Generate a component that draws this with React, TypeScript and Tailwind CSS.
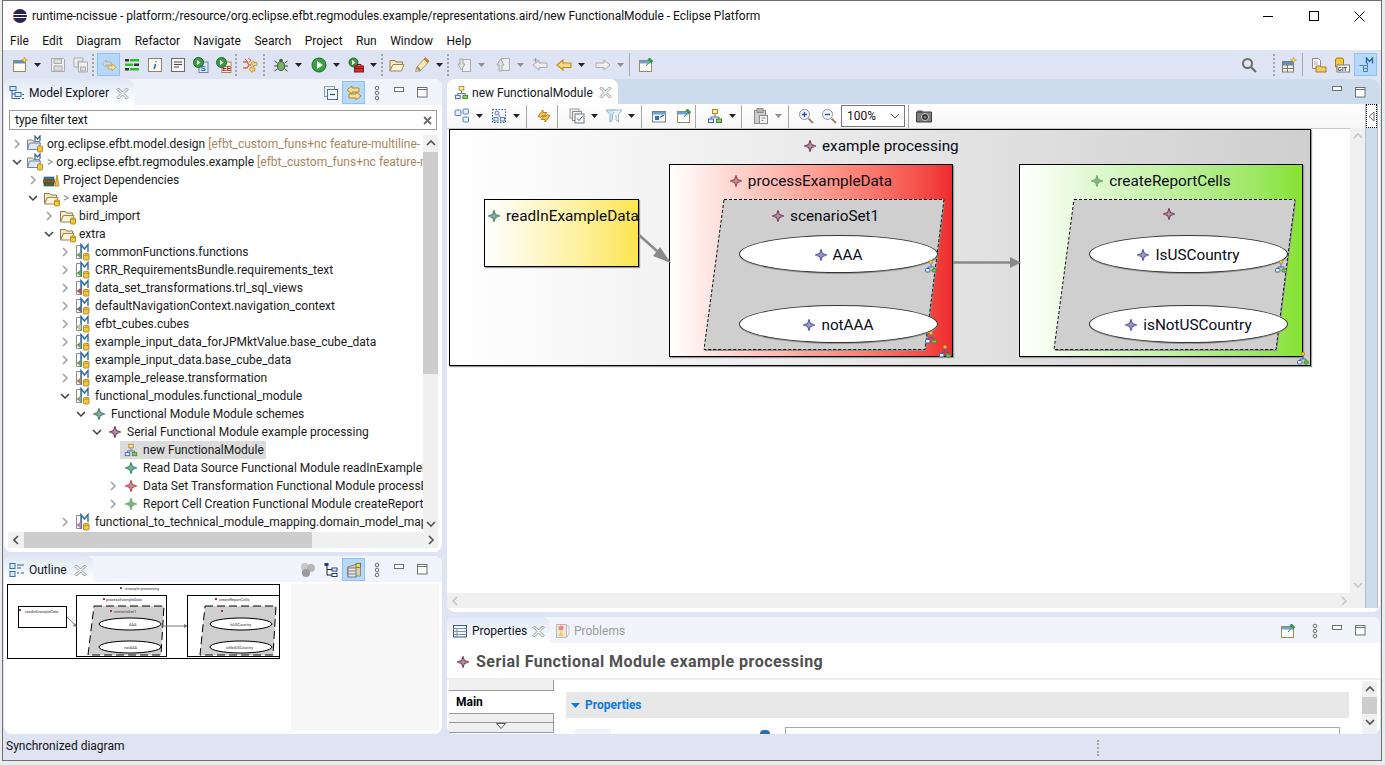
import type { ReactNode } from "react";

// ---- small drawn icons ----

type IconProps = { className?: string };

function Diamond({ color = "#8a3a5e", size = 12 }: { color?: string; size?: number }) {
  return (
    <svg width={size} height={size} viewBox="0 0 12 12" className="shrink-0">
      <path d="M6 .5 7.4 4.6 11.5 6 7.4 7.4 6 11.5 4.6 7.4.5 6 4.6 4.6Z" fill="#a0a0ac" stroke={color} strokeWidth="1.100" />
    </svg>
  );
}

function DiagramGlyph({ size = 16 }: { size?: number }) {
  return (
    <svg width={size} height={size} viewBox="0 0 16 16" className="shrink-0">
      <path d="M8 6v3M4 11V9h8v2" fill="none" stroke="#4a6aa8" />
      <rect x="5.5" y="1.5" width="5" height="4" fill="#fbe9a8" stroke="#b98a1c" />
      <rect x="1.5" y="11" width="5" height="3.5" fill="#e6eefa" stroke="#3b63ad" />
      <rect x="9.5" y="11" width="5" height="3.5" fill="#8ccb5e" stroke="#3f8a2e" />
    </svg>
  );
}

function Cyl() {
  return (
    <>
      <rect x="11" y="10" width="5" height="6" rx="1" fill="#f3c63c" stroke="#a67c10" strokeWidth=".8" />
      <path d="M11.2 11.5h4.6" stroke="#a67c10" strokeWidth=".6" />
    </>
  );
}

function ProjectIcon() {
  return (
    <svg width="18" height="18" viewBox="0 0 18 18" className="shrink-0">
      <path d="M1.5 5h5l1 1.5h6v8h-12Z" fill="#f6e8c4" stroke="#77838f" />
      <path d="M1.5 14.5 3.5 8h11l-1.5 6.5Z" fill="#dbe8f6" stroke="#6a86a8" />
      <path d="M9 6V1l2.4 3L14 1v5" fill="none" stroke="#2f5f98" strokeWidth="1.2" />
      <rect x="11.5" y="11" width="5" height="6" rx="1" fill="#f3c63c" stroke="#a67c10" strokeWidth=".8" />
    </svg>
  );
}

function FolderOpenIcon() {
  return (
    <svg width="17" height="17" viewBox="0 0 17 17" className="shrink-0">
      <path d="M1.5 3.5h5l1.2 1.5h5.8v2.5h-9l-3 6.5Z" fill="#f8e6bd" stroke="#8a7a58" />
      <path d="M1.5 14 4.5 7.5h10.5L12.5 14Z" fill="#fdf3da" stroke="#a08850" />
      <g transform="translate(.5 0)"><Cyl /></g>
    </svg>
  );
}

function LibraryIcon() {
  return (
    <svg width="17" height="17" viewBox="0 0 17 17" className="shrink-0">
      <rect x="1" y="5" width="10" height="3" fill="#3e7f86" stroke="#2b4f56" strokeWidth=".6" />
      <rect x="0.5" y="8" width="11" height="3" fill="#9c5b2e" stroke="#5d3413" strokeWidth=".6" />
      <rect x="1" y="11" width="10" height="3" fill="#3f6d3f" stroke="#2d4a2d" strokeWidth=".6" />
      <path d="M12 14 14 3l2 11Z" fill="#f2c53d" stroke="#9c7d1a" strokeWidth=".7" />
    </svg>
  );
}

function ModelFileIcon({ tint = "#6aa84f" }: { tint?: string }) {
  return (
    <svg width="16" height="18" viewBox="0 0 16 18" className="shrink-0">
      <path d="M1.5 2.500h5v13h-5Z" fill="#fff" stroke="#8a8a8a" />
      <path d="M6 9V1.500L9.500 6 13 1.500V9" fill="none" stroke="#2f6aa8" strokeWidth="1.400" />
      <path d="M6.500 8.500 2 12l4.500 3.500Z" fill={tint} stroke="#555" strokeWidth=".5" />
      <rect x="8.5" y="10.5" width="5.5" height="6.5" rx="1" fill="#f3c63c" stroke="#a67c10" strokeWidth=".8" />
      <path d="M8.800 12.300h5" stroke="#a67c10" strokeWidth=".6" />
    </svg>
  );
}

function Close({ className = "" }: IconProps) {
  return (
    <svg width="13" height="13" viewBox="0 0 13 13" className={`shrink-0 ${className}`}>
      <path d="M2.5 1 6.5 5l4-4 1.500 1.500-4 4 4 4-1.500 1.500-4-4-4 4L1 10.500l4-4-4-4Z" fill="#fff" stroke="#858585" strokeWidth=".9" />
    </svg>
  );
}

function Chevron({ open }: { open?: boolean }) {
  return (
    <svg width="10" height="10" viewBox="0 0 10 10" className="shrink-0">
      {open ? (
        <path d="M1 3 5 7l4-4" fill="none" stroke="#404040" strokeWidth="1.5" />
      ) : (
        <path d="M3 1l4 4-4 4" fill="none" stroke="#a0a0a0" strokeWidth="1.5" />
      )}
    </svg>
  );
}

function Dots() {
  return (
    <svg width="8" height="16" viewBox="0 0 8 16">
      <g fill="none" stroke="#6f6f6f">
        <circle cx="4" cy="3" r="1.800" />
        <circle cx="4" cy="8" r="1.800" />
        <circle cx="4" cy="13" r="1.800" />
      </g>
    </svg>
  );
}

function Minimize() {
  return (
    <svg width="11" height="6" viewBox="0 0 11 6" className="-mt-[6px]">
      <rect x=".5" y=".5" width="9" height="4" fill="#fff" stroke="#6f6f6f" />
    </svg>
  );
}

function Maximize() {
  return (
    <svg width="11" height="11" viewBox="0 0 11 11">
      <rect x=".5" y=".5" width="9.500" height="9.500" fill="#fff" stroke="#6f6f6f" />
      <path d="M.5 2.500h9.500" stroke="#6f6f6f" />
    </svg>
  );
}

function S({ children }: { children: ReactNode }) {
  return (
    <svg width="16" height="16" viewBox="0 0 16 16" className="shrink-0">
      {children}
    </svg>
  );
}

const PlayDot = ({ x = 5.5, y = 5.5, r = 5 }: { x?: number; y?: number; r?: number }) => (
  <>
    <circle cx={x} cy={y} r={r} fill="#3c9a41" stroke="#1e6a2c" />
    <path d={`M${x - 1.5} ${y - 2.5}v5l3.500-2.500Z`} fill="#fff" />
  </>
);

const icons: Record<string, ReactNode> = {
  newWiz: (
    <S>
      <rect x="1.500" y="3.500" width="12" height="11" fill="#fdfaf0" stroke="#9c8a62" />
      <rect x="2" y="4" width="11" height="2.500" fill="#5c8ec8" />
      <path d="M12.500 0l.9 2.100 2.100.9-2.100.9-.9 2.100-.9-2.100-2.100-.9 2.100-.9Z" fill="#f6d55c" stroke="#a88a20" strokeWidth=".5" />
    </S>
  ),
  save: (
    <S>
      <path d="M1.500 1.500h12l1 1v12h-13Z" fill="#f0f0f0" stroke="#aaa" />
      <rect x="4" y="2" width="7.500" height="4.500" fill="#ddd" stroke="#aaa" />
      <rect x="4" y="9" width="8" height="5" fill="#ddd" stroke="#aaa" />
    </S>
  ),
  saveAll: (
    <S>
      <path d="M1 1h9v3h-5v6H1Z" fill="#eee" stroke="#aaa" />
      <path d="M5.500 5h9v10h-9Z" fill="#f0f0f0" stroke="#aaa" />
      <rect x="7.500" y="10" width="5" height="4" fill="#ddd" stroke="#aaa" />
    </S>
  ),
  toggleSync: (
    <S>
      <path d="M1 7 5 3v2h5v3H5v2Z" fill="#d9d9d9" stroke="#aaa" />
      <path d="M15 10l-4 4v-2H7V9h4V7Z" fill="#f5dfa8" stroke="#c4a860" />
    </S>
  ),
  bars: (
    <S>
      <rect x="1" y="2" width="4" height="2.500" fill="#333" />
      <rect x="6" y="2" width="9" height="2.500" fill="#2bc02b" />
      <rect x="1" y="6.500" width="8" height="2.500" fill="#2bc02b" />
      <rect x="10" y="6.500" width="5" height="2.500" fill="#333" />
      <rect x="1" y="11" width="4" height="2.500" fill="#333" />
      <rect x="6" y="11" width="9" height="2.500" fill="#2bc02b" />
    </S>
  ),
  info: (
    <S>
      <rect x="1.500" y="1.500" width="13" height="13" fill="#fdfaf0" stroke="#8a8470" />
      <path d="M9 4.200v1M8.500 7l-1.300 5" stroke="#2f6fc0" strokeWidth="1.700" fill="none" />
    </S>
  ),
  textDoc: (
    <S>
      <rect x="1.500" y="1.500" width="13" height="13" fill="#f4f4f4" stroke="#6a6a6a" />
      <path d="M4 5h8M4 7.500h8M4 10h5" stroke="#444" />
    </S>
  ),
  runS: (
    <S>
      <rect x="6" y="5" width="9" height="10.500" fill="#dce9f6" stroke="#6a86a8" />
      <text x="7.500" y="14" fontSize="8" fontWeight="700" fill="#2e6aa8" fontFamily="Liberation Sans">S</text>
      <PlayDot />
    </S>
  ),
  runEE: (
    <S>
      <rect x="6" y="5" width="9" height="10.500" fill="#fdf3da" stroke="#a08850" />
      <text x="6.500" y="14" fontSize="6.500" fontWeight="700" fill="#b0201a" fontFamily="Liberation Sans">EE</text>
      <PlayDot />
    </S>
  ),
  share: (
    <S>
      <path d="M1 5h4l2 3-2 3H1M7 8h2" stroke="#e8663c" strokeWidth="1.300" fill="none" />
      <path d="M6 1l3 2-2 2.500M3 2l3 3" stroke="#e8663c" strokeWidth="1" fill="none" />
      <path d="M9 6l3-2v1.500h3v3h-3V10Z" fill="#f5d36a" stroke="#b88a1c" strokeWidth=".7" />
      <path d="M7 12l3-2.500V11h3v3h-3v1.500Z" fill="#f5d36a" stroke="#b88a1c" strokeWidth=".7" />
    </S>
  ),
  bug: (
    <S>
      <ellipse cx="8" cy="9" rx="3.500" ry="4.500" fill="#7fb069" stroke="#3b5a35" />
      <circle cx="8" cy="3.500" r="1.800" fill="#43603c" />
      <path d="M4.500 6 1.500 4M4 9H1M4.500 12l-3 2M11.500 6l3-2M12 9h3M11.500 12l3 2" stroke="#3a4a48" />
    </S>
  ),
  run: (
    <S>
      <circle cx="8" cy="8" r="7" fill="#39a13e" stroke="#1f6b2c" />
      <path d="M6 4v8l6-4Z" fill="#fff" />
    </S>
  ),
  ext: (
    <S>
      <PlayDot r={4.500} />
      <rect x="6.500" y="9" width="9" height="6" fill="#d62d2d" stroke="#8c1515" />
      <path d="M9 9V7.500h4V9M6.500 11.500h9" stroke="#7b1010" fill="none" />
    </S>
  ),
  open: (
    <S>
      <path d="M1 3.500h5l1 1.500h6.500v3H4l-3 6Z" fill="#f8e6bd" stroke="#8a7a58" />
      <path d="M1 14 4 7.500h11L12.500 14Z" fill="#fdf3da" stroke="#a08850" />
    </S>
  ),
  pen: (
    <S>
      <path d="M1.500 14.500 3 10l7-8 4 3.500-7.500 8Z" fill="#f9e7b8" stroke="#b79a5c" />
      <path d="M10 2l4 3.500 1-1.500-3.500-3.500Z" fill="#d88a2c" stroke="#a5620e" strokeWidth=".6" />
      <path d="M3 10l3.500 4" stroke="#8d8d8d" strokeWidth="2" />
    </S>
  ),
  navDown: (
    <S>
      <rect x="6.500" y="2.500" width="8" height="12" fill="#eee" stroke="#aaa" />
      <path d="M2 7h2V2h3v5h2l-3.500 6Z" fill="#e2e2e2" stroke="#a8a8a8" />
    </S>
  ),
  navUp: (
    <S>
      <rect x="6.500" y="1.500" width="8" height="12" fill="#eee" stroke="#aaa" />
      <path d="M2 8h2v6h3V8h2L5.500 2Z" fill="#e2e2e2" stroke="#a8a8a8" />
    </S>
  ),
  lastEdit: (
    <S>
      <path d="M1 8l6-4.500V6h8v4.500H7V13Z" fill="#ececec" stroke="#aaa" />
      <path d="M3.500 1v4M1.500 3h4" stroke="#999" />
    </S>
  ),
  back: (
    <S>
      <path d="M1 8l6-5v3h8v4.500H7V13Z" fill="#f8d88a" stroke="#c08a1e" strokeWidth="1.100" />
    </S>
  ),
  fwd: (
    <S>
      <path d="M15 8 9 3v3H1v4.500h8V13Z" fill="#eeeeee" stroke="#ababab" />
    </S>
  ),
  pin: (
    <S>
      <rect x="1.500" y="3.500" width="12" height="11" fill="#fff" stroke="#9c8a62" />
      <rect x="2" y="4" width="11" height="2.500" fill="#6ba3da" />
      <path d="M8 9l3-3.500M10 2.500l3.500 3 1-1.500L11.500 1Z" stroke="#2c8a3c" fill="#3da44a" strokeWidth="1" />
    </S>
  ),
  search: (
    <S>
      <circle cx="6.500" cy="6.500" r="4.500" fill="none" stroke="#6b6b6b" strokeWidth="2" />
      <path d="M10 10l5 5" stroke="#6b6b6b" strokeWidth="2.200" />
    </S>
  ),
  persp: (
    <S>
      <rect x="1.500" y="4.500" width="11" height="10.500" fill="#f9f4e4" stroke="#7a7a72" />
      <path d="M1.500 8h11M1.500 11.500h11M6.500 4.500V15" stroke="#7a7a72" />
      <rect x="2" y="5" width="10" height="3" fill="#5f8fc0" />
      <path d="M12.500 0l.9 2.100 2.100.9-2.100.9-.9 2.100-.9-2.100-2.100-.9 2.100-.9Z" fill="#f6d55c" stroke="#a88a20" strokeWidth=".5" />
    </S>
  ),
  resPersp: (
    <S>
      <path d="M1.500 1.500h6l2 2v8h-8Z" fill="#fff" stroke="#8a8a8a" />
      <path d="M3 5h4M3 7h4" stroke="#aaa" />
      <path d="M5 9h4l1 1h5v5H5Z" fill="#f4c869" stroke="#a67c10" />
    </S>
  ),
  git: (
    <S>
      <rect x="1.500" y="1" width="8" height="10" rx="2" fill="#f3c63c" stroke="#a67c10" />
      <rect x="3" y="8" width="12.500" height="7" fill="#fff" stroke="#777" />
      <text x="3.800" y="14" fontSize="5.500" fontWeight="700" fill="#333" fontFamily="Liberation Sans">GIT</text>
    </S>
  ),
  modeling: (
    <S>
      <path d="M1.500 8.500h4v3h4v-3h-3.500M5.500 11.500v3h4v-3M9.500 8.500V6" fill="none" stroke="#4f81b0" />
      <path d="M8.500 6.500V1l3 3.500 3-3.500v5.500" fill="none" stroke="#2f6aa0" strokeWidth="1.400" />
    </S>
  ),
  selectAll: (
    <S>
      <rect x="1" y="2" width="6" height="5.500" rx="1" fill="#e4effa" stroke="#5c82b4" />
      <rect x="9" y="1" width="5.500" height="5" rx="1" fill="#e4effa" stroke="#5c82b4" />
      <rect x="9" y="9" width="5.500" height="5" rx="1" fill="#e4effa" stroke="#5c82b4" />
    </S>
  ),
  arrange: (
    <S>
      <rect x="1.500" y="1.500" width="13" height="13" fill="none" stroke="#2b4f96" strokeDasharray="1.500 1.500" />
      <circle cx="6" cy="5" r="2" fill="#e4effa" stroke="#5c82b4" />
      <rect x="3" y="9.500" width="4" height="3.500" fill="#e4effa" stroke="#5c82b4" />
      <rect x="9.500" y="9.500" width="4" height="3.500" fill="#e4effa" stroke="#5c82b4" />
      <path d="M7 6l3 4" stroke="#5c82b4" />
    </S>
  ),
  refresh: (
    <S>
      <path d="M2 8.500 7 2v2.500h4L7 9V7L4.500 9.500Z" fill="#f5c84f" stroke="#b4801a" />
      <path d="M14 7.500 9 14v-2.500H5L9 7v2l2.500-2.500Z" fill="#f5c84f" stroke="#b4801a" />
    </S>
  ),
  layers: (
    <S>
      <rect x="1" y="1" width="9" height="9" fill="#f0f0f0" stroke="#9a9a9a" />
      <rect x="3.500" y="3.500" width="9" height="9" fill="#f4f4f4" stroke="#8a8a8a" />
      <rect x="6" y="6" width="9" height="9" fill="#fafafa" stroke="#6a7a88" />
      <path d="M8 10.500l2 2 3.500-4" fill="none" stroke="#4a5a68" />
    </S>
  ),
  filter: (
    <S>
      <path d="M0 2h10L6.500 6.500V12L4 14V6.500Z" fill="#d2e6f4" stroke="#8db0c4" />
      <path d="M7 2h9l-3.500 4.500V14L10 12V7" fill="#e8f2f8" stroke="#9abccc" />
    </S>
  ),
  showLink: (
    <S>
      <rect x="1.500" y="3.500" width="13" height="10.500" fill="#f5f9fc" stroke="#72808c" />
      <rect x="2" y="4" width="12" height="2.500" fill="#6ba3da" />
      <rect x="4" y="8" width="4" height="4" fill="#3a70b0" />
      <path d="M9 9.500l2-2h2" stroke="#2c8a3c" />
    </S>
  ),
  paste: (
    <S>
      <rect x="1.500" y="2.500" width="11" height="13" fill="#cfcfcf" stroke="#8a8a8a" />
      <rect x="4" y=".5" width="6" height="4" fill="#b5b5b5" stroke="#8a8a8a" />
      <rect x="6.500" y="7.500" width="8" height="8" fill="#f6f6f6" stroke="#8a8a8a" />
      <path d="M8.500 10h4M8.500 12.500h2" stroke="#888" />
    </S>
  ),
  zoomIn: (
    <S>
      <circle cx="6.500" cy="6.500" r="5" fill="#f1f5fb" stroke="#8a94a8" />
      <path d="M4 6.500h5M6.500 4v5" stroke="#2a52b0" strokeWidth="1.400" />
      <path d="M10.500 10.500l4.500 4.500" stroke="#a08a60" strokeWidth="2" />
    </S>
  ),
  zoomOut: (
    <S>
      <circle cx="6.500" cy="6.500" r="5" fill="#f1f5fb" stroke="#8a94a8" />
      <path d="M4 6.500h5" stroke="#2a52b0" strokeWidth="1.400" />
      <path d="M10.500 10.500l4.500 4.500" stroke="#a08a60" strokeWidth="2" />
    </S>
  ),
  camera: (
    <S>
      <path d="M.5 4h15v10H.5Z" fill="#7e7e7e" stroke="#3e3e3e" />
      <rect x="1.500" y="2.500" width="5" height="2" fill="#555" />
      <circle cx="9" cy="9" r="3.500" fill="#2b2b2b" stroke="#d0d0d0" />
      <circle cx="9" cy="9" r="1.500" fill="#6f8f7a" />
    </S>
  ),
  collapse: (
    <S>
      <rect x="1.500" y="1.500" width="10" height="10" fill="#e8f0f8" stroke="#8a9bae" />
      <rect x="4.500" y="4.500" width="10" height="10" fill="#f4f8fc" stroke="#54708e" />
      <path d="M7 9.500h5" stroke="#1c4a86" strokeWidth="1.200" />
    </S>
  ),
  linkEditor: (
    <S>
      <path d="M1 5l5-4v2h7v4H6v2Z" fill="#f7dc93" stroke="#b08a24" />
      <path d="M15 11l-5-4v2H3v4h7v2Z" fill="#f7dc93" stroke="#b08a24" />
    </S>
  ),
  balls: (
    <S>
      <circle cx="5" cy="5" r="4" fill="#c7c7c7" />
      <circle cx="11" cy="6" r="4" fill="#b5b5b5" />
      <circle cx="6" cy="11" r="4" fill="#9a9a9a" />
    </S>
  ),
  treeAlt: (
    <S>
      <path d="M4 3v10h5M4 7.500h5" stroke="#222" fill="none" />
      <rect x="1.500" y="1" width="4" height="3" fill="#1b3d8f" />
      <rect x="9" y="6" width="5" height="3" fill="#fff" stroke="#1b3d8f" />
      <rect x="9" y="11.500" width="5" height="3" fill="#fff" stroke="#1b3d8f" />
    </S>
  ),
  table: (
    <S>
      <path d="M1.500 5 14.500 1v13H1.500Z" fill="#d6cfa5" stroke="#8e8a70" />
      <rect x="2" y="6" width="8" height="9" fill="#e8e8e8" stroke="#7a7a7a" />
      <path d="M2 9h8M2 12h8" stroke="#7a7a7a" />
      <rect x="10" y="1.500" width="4.500" height="4" fill="#f5d84a" stroke="#555" strokeWidth=".7" />
    </S>
  ),
  outline: (
    <S>
      <rect x="1" y="1.500" width="5" height="5" fill="#dceaf8" stroke="#2f70b5" />
      <rect x="1" y="9.500" width="5" height="5" fill="#dceaf8" stroke="#2f70b5" />
      <path d="M8 3h7M8 6h4M8 11h2M12 11h3" stroke="#2f5f98" />
    </S>
  ),
  explorer: (
    <S>
      <rect x="1" y="1.500" width="6" height="4" fill="#dceaf8" stroke="#2f70b5" />
      <rect x="6" y="7.500" width="6" height="4" fill="#dceaf8" stroke="#2f70b5" />
      <path d="M3 5.500v8h8M3 9h3M13 9.500h2M13 13.500h2" stroke="#47617e" fill="none" />
    </S>
  ),
  propsTab: (
    <S>
      <rect x="1.500" y="2.500" width="13" height="11.500" fill="#f4f7fb" stroke="#3f5a86" />
      <path d="M1.500 5.500h13M1.500 8.500h13M1.500 11.500h13M5 5.500V14" stroke="#7c8fae" />
    </S>
  ),
  problems: (
    <S>
      <rect x="1.500" y="1.500" width="10" height="13" fill="#f1e6d6" stroke="#bbb" />
      <circle cx="6" cy="5" r="2.500" fill="#e88a8a" />
      <path d="M3 13l3-5 3 5Z" fill="#f0cc70" />
      <path d="M11.500 3h2.500v7l-2 4" fill="none" stroke="#c6c6c6" />
    </S>
  ),
};

// ---- toolbar bits ----

function Btn({ name, on, className = "" }: { name: string; on?: boolean; className?: string }) {
  return (
    <div
      className={`flex h-[23px] w-[23px] shrink-0 items-center justify-center ${
        on ? "bg-[#b6d9fb] outline outline-[#8ec2f4] -outline-offset-1" : ""
      } ${className}`}
    >
      {icons[name]}
    </div>
  );
}

function Dd({ dim, className = "" }: { dim?: boolean; className?: string }) {
  return (
    <div className={`flex w-[12px] shrink-0 justify-center ${className}`}>
      <svg width="7" height="4" viewBox="0 0 7 4">
        <path d="M0 0h7L3.500 4Z" fill={dim ? "#8f8f8f" : "#222"} />
      </svg>
    </div>
  );
}

function Grip({ className = "" }: { className?: string }) {
  return <div className={`h-[22px] w-[2px] shrink-0 border-l-2 border-dotted border-[#a8a49a] ${className}`} />;
}

function VLine({ className = "" }: { className?: string }) {
  return <div className={`h-[23px] w-px shrink-0 bg-[#a8a8a8] ${className}`} />;
}

function MainToolbar() {
  return (
    <div className="flex h-[29px] items-center bg-[#dfe4f4] pl-[5px] pr-[4px]">
      <Btn name="newWiz" />
      <Dd />
      <Btn name="save" className="ml-[3px]" />
      <Btn name="saveAll" />
      <Grip />
      <Btn name="toggleSync" on className="ml-[3px]" />
      <Btn name="bars" />
      <Btn name="info" />
      <Btn name="textDoc" />
      <Btn name="runS" />
      <Btn name="runEE" />
      <Grip />
      <Btn name="share" className="ml-[1px]" />
      <Grip className="ml-[2px]" />
      <Btn name="bug" className="ml-[4px]" />
      <Dd />
      <Btn name="run" className="ml-[3px]" />
      <Dd />
      <Btn name="ext" className="ml-[2px]" />
      <Dd />
      <Grip className="ml-[2px]" />
      <Btn name="open" className="ml-[2px]" />
      <Btn name="pen" className="ml-[2px]" />
      <Dd />
      <Grip className="ml-[2px]" />
      <Btn name="navDown" className="ml-[3px]" />
      <Dd dim />
      <Btn name="navUp" className="ml-[4px]" />
      <Dd dim />
      <Btn name="lastEdit" className="ml-[2px]" />
      <Btn name="back" className="ml-[1px]" />
      <Dd />
      <Btn name="fwd" className="ml-[4px]" />
      <Dd dim />
      <VLine className="ml-[3px]" />
      <Btn name="pin" className="ml-[4px]" />
      <div className="flex-1" />
      <Btn name="search" />
      <Grip className="ml-[13px]" />
      <Btn name="persp" className="ml-[2px]" />
      <VLine className="ml-[2px]" />
      <Btn name="resPersp" className="ml-[4px]" />
      <Btn name="git" />
      <Btn name="modeling" on className="ml-[1px]" />
    </div>
  );
}

function EditorToolbar() {
  return (
    <div className="flex h-[24px] items-center bg-linear-to-b from-white to-[#f6f6f6] pl-[3px]">
      <Btn name="selectAll" />
      <Dd />
      <Btn name="arrange" className="ml-[2px]" />
      <Dd />
      <VLine className="ml-[4px] h-[20px]" />
      <Btn name="refresh" className="ml-[5px]" />
      <VLine className="ml-[2px] h-[20px]" />
      <Btn name="layers" className="ml-[7px]" />
      <Dd />
      <Btn name="filter" className="ml-[2px]" />
      <Dd />
      <VLine className="ml-[4px] h-[20px]" />
      <Btn name="showLink" className="ml-[5px]" />
      <Btn name="pin" className="ml-[2px]" />
      <VLine className="h-[20px]" />
      <div className="ml-[7px] flex h-[23px] w-[23px] shrink-0 items-center justify-center">
        <DiagramGlyph />
      </div>
      <Dd />
      <VLine className="ml-[3px] h-[20px]" />
      <Btn name="paste" className="ml-[7px]" />
      <Dd dim />
      <VLine className="ml-[4px] h-[20px]" />
      <Btn name="zoomIn" className="ml-[5px]" />
      <Btn name="zoomOut" />
      <div className="ml-[1px] flex h-[22px] w-[64px] shrink-0 items-center justify-between border border-[#7a7a7a] bg-white pl-[5px] pr-[4px] text-[#111]">
        100%
        <svg width="10" height="6" viewBox="0 0 10 6">
          <path d="M1 1l4 4 4-4" fill="none" stroke="#555" />
        </svg>
      </div>
      <VLine className="ml-[3px] h-[20px]" />
      <Btn name="camera" className="ml-[3px]" />
    </div>
  );
}

// ---- tree ----

type Row = { depth: number; open?: boolean; leaf?: boolean; icon: ReactNode; text: string; deco?: string; prefix?: boolean; sel?: boolean };

const rows: Row[] = [
  { depth: 0, icon: <ProjectIcon />, text: "org.eclipse.efbt.model.design", deco: " [efbt_custom_funs+nc feature-multiline-" },
  { depth: 0, open: true, icon: <ProjectIcon />, text: "org.eclipse.efbt.regmodules.example", deco: " [efbt_custom_funs+nc feature-multiline", prefix: true },
  { depth: 1, icon: <LibraryIcon />, text: "Project Dependencies" },
  { depth: 1, open: true, icon: <FolderOpenIcon />, text: "example", prefix: true },
  { depth: 2, icon: <FolderOpenIcon />, text: "bird_import" },
  { depth: 2, open: true, icon: <FolderOpenIcon />, text: "extra" },
  { depth: 3, icon: <ModelFileIcon tint="#7f9a7f" />, text: "commonFunctions.functions" },
  { depth: 3, icon: <ModelFileIcon tint="#4caf50" />, text: "CRR_RequirementsBundle.requirements_text" },
  { depth: 3, icon: <ModelFileIcon tint="#c0504d" />, text: "data_set_transformations.trl_sql_views" },
  { depth: 3, icon: <ModelFileIcon tint="#707070" />, text: "defaultNavigationContext.navigation_context" },
  { depth: 3, icon: <ModelFileIcon tint="#c6d39a" />, text: "efbt_cubes.cubes" },
  { depth: 3, icon: <ModelFileIcon tint="#6aa84f" />, text: "example_input_data_forJPMktValue.base_cube_data" },
  { depth: 3, icon: <ModelFileIcon tint="#6aa84f" />, text: "example_input_data.base_cube_data" },
  { depth: 3, icon: <ModelFileIcon tint="#c48a3c" />, text: "example_release.transformation" },
  { depth: 3, open: true, icon: <ModelFileIcon tint="#8ab06a" />, text: "functional_modules.functional_module" },
  { depth: 4, open: true, icon: <Diamond color="#3f8a6a" />, text: "Functional Module Module schemes" },
  { depth: 5, open: true, icon: <Diamond color="#8a3a5e" />, text: "Serial Functional Module example processing" },
  { depth: 6, leaf: true, sel: true, icon: <DiagramGlyph size={14} />, text: "new FunctionalModule" },
  { depth: 6, leaf: true, icon: <Diamond color="#21996b" />, text: "Read Data Source Functional Module readInExampleData" },
  { depth: 6, icon: <Diamond color="#d0474f" />, text: "Data Set Transformation Functional Module processExampleData" },
  { depth: 6, icon: <Diamond color="#68b768" />, text: "Report Cell Creation Functional Module createReportCells" },
  { depth: 3, icon: <ModelFileIcon tint="#c77fc7" />, text: "functional_to_technical_module_mapping.domain_model_mapping" },
];

function TreeRow({ row }: { row: Row }) {
  return (
    <div className="flex h-[18px] items-center whitespace-nowrap" style={{ paddingLeft: row.depth * 16 + 4 }}>
      <div className="flex w-[10px] shrink-0 justify-center">{!row.leaf && <Chevron open={row.open} />}</div>
      <div className={`ml-[2px] flex h-[18px] items-center pl-[2px] pr-[2px] ${row.sel ? "bg-[#dcdcdc]" : ""}`}>
        <div className="flex w-[18px] shrink-0 justify-center">{row.icon}</div>
        <div className="ml-[3px] flex items-center">
          {row.prefix && <span className="mr-[3px] text-[#8a8a8a]">&gt;</span>}
          <span className="text-[#1a1a1a]">{row.text}</span>
          {row.deco && <span className="whitespace-pre text-[#a4885e]">{row.deco}</span>}
        </div>
      </div>
    </div>
  );
}

function ScrollV({ up, down, dim, thumb }: { up?: boolean; down?: boolean; dim?: boolean; thumb: ReactNode }) {
  return (
    <div className="flex w-[15px] shrink-0 flex-col bg-[#f0f0f0]">
      {up && <Arrow d="M2 7l4-4 4 4" dim={dim} />}
      {thumb}
      {down && <Arrow d="M2 3l4 4 4-4" dim={dim} />}
    </div>
  );
}

function Arrow({ d, dim }: { d: string; dim?: boolean }) {
  return (
    <div className="flex h-[16px] w-[15px] shrink-0 items-center justify-center">
      <svg width="12" height="10" viewBox="0 0 12 10">
        <path d={d} fill="none" stroke={dim ? "#c8c8c8" : "#555"} strokeWidth="1.700" />
      </svg>
    </div>
  );
}

function PanelHeader({ children, actions }: { children: ReactNode; actions: ReactNode }) {
  return (
    <div className="flex h-[26px] shrink-0 items-center justify-between rounded-t-lg bg-[#f2f4fb]">
      <div className="flex h-full items-stretch">{children}</div>
      <div className="flex items-center pr-[8px] pt-[1px]">{actions}</div>
    </div>
  );
}

function Tab({ icon, label, className = "", closeClass = "ml-[7px]" }: { icon: ReactNode; label: string; className?: string; closeClass?: string }) {
  return (
    <div className={`flex items-center rounded-t-lg bg-linear-to-b from-[#dfe8f5] to-white pl-[5px] pt-[2px] ${className}`}>
      {icon}
      <span className="ml-[4px] text-[#10141c]">{label}</span>
      <Close className={closeClass} />
    </div>
  );
}

function Act({ children, on }: { children: ReactNode; on?: boolean }) {
  return (
    <div className={`flex h-[23px] w-[23px] items-center justify-center ${on ? "bg-[#b6d9fb] outline outline-[#8ec2f4] -outline-offset-1" : ""}`}>
      {children}
    </div>
  );
}

function ModelExplorer() {
  return (
    <div className="flex h-[473px] flex-col rounded-lg bg-white">
      <PanelHeader
        actions={
          <>
            <Act>{icons.collapse}</Act>
            <Act on>{icons.linkEditor}</Act>
            <Act><Dots /></Act>
            <Act><Minimize /></Act>
            <Act><Maximize /></Act>
          </>
        }
      >
        <Tab icon={icons.explorer} label="Model Explorer" className="w-[130px]" />
      </PanelHeader>
      <div className="mx-[5px] mt-[5px] flex h-[20px] shrink-0 items-center justify-between border border-[#9a9a9a] bg-white pl-[5px] pr-[4px] text-[#111]">
        type filter text
        <svg width="9" height="9" viewBox="0 0 9 9">
          <path d="M1 1l7 7M8 1 1 8" stroke="#6a6a6a" strokeWidth="1.800" />
        </svg>
      </div>
      <div className="mt-[5px] flex min-h-0 flex-1 pl-[4px] pr-[3px]">
        <div className="w-[415px] overflow-hidden">
          {rows.map((r) => (
            <TreeRow key={r.text} row={r} />
          ))}
        </div>
        <ScrollV
          up
          down
          thumb={
            <div className="flex flex-1 flex-col">
              <div className="h-[1px]" />
              <div className="h-[222px] bg-[#cdcdcd]" />
            </div>
          }
        />
      </div>
      <div className="mx-[4px] mb-[4px] flex h-[16px] shrink-0 items-center bg-[#f0f0f0]">
        <Arrow d="M8 1 4 5l4 4" />
        <div className="ml-[1px] h-full w-[288px] bg-[#cdcdcd]" />
        <div className="flex-1" />
        <Arrow d="M4 1l4 4-4 4" />
      </div>
    </div>
  );
}

function Thumb() {
  const t = "#6a5a6a";
  return (
    <svg width="274" height="76" viewBox="0 0 274 76" className="block shrink-0">
      <rect x=".5" y=".5" width="272" height="74" fill="#fff" stroke="#000" />
      <rect x="11.500" y="22.500" width="48" height="21" fill="#fff" stroke="#000" />
      <rect x="69.500" y="11.500" width="90" height="61" fill="#fff" stroke="#000" />
      <rect x="180.500" y="11.500" width="92" height="61" fill="#fff" stroke="#000" />
      <path d="M87 22h70l-3 49H81Z" fill="#cfcfcf" stroke="#000" strokeDasharray="8 4" />
      <path d="M198 22h71l-3 49h-73Z" fill="#cfcfcf" stroke="#000" strokeDasharray="8 4" />
      <ellipse cx="123" cy="40" rx="31" ry="6" fill="#fff" stroke="#000" />
      <ellipse cx="123" cy="63" rx="31" ry="6" fill="#fff" stroke="#000" />
      <ellipse cx="234" cy="40" rx="31" ry="6" fill="#fff" stroke="#000" />
      <ellipse cx="234" cy="63" rx="31" ry="6" fill="#fff" stroke="#000" />
      <path d="M60 33l8 8M154 42h24" stroke="#777" />
      <path d="M70 43l-4-1 2-3ZM181 42l-4-2v4Z" fill="#777" />
      <g fill="#8a3a5e">
        <rect x="113" y="3" width="2" height="2" />
        <rect x="96" y="14" width="2" height="2" />
        <rect x="208" y="14" width="2" height="2" />
        <rect x="12" y="25" width="2" height="2" />
        <rect x="103" y="26" width="2" height="2" />
        <rect x="214" y="26" width="2" height="2" />
      </g>
      <g fontSize="3.800" fill={t} fontFamily="Roboto, sans-serif" fontWeight="500">
        <text x="118" y="6">example processing</text>
        <text x="18" y="29">readInExampleData</text>
        <text x="99" y="17">processExampleData</text>
        <text x="212" y="17">createReportCells</text>
        <text x="107" y="29">scenarioSet1</text>
        <text x="122" y="42">AAA</text>
        <text x="117" y="65">notAAA</text>
        <text x="223" y="42">IsUSCountry</text>
        <text x="219" y="65">isNotUSCountry</text>
      </g>
    </svg>
  );
}

function OutlinePanel() {
  return (
    <div className="mt-[4px] flex h-[178px] flex-col rounded-lg bg-white">
      <PanelHeader
        actions={
          <>
            <Act>{icons.balls}</Act>
            <Act>{icons.treeAlt}</Act>
            <Act on>{icons.table}</Act>
            <Act><Dots /></Act>
            <Act><Minimize /></Act>
            <Act><Maximize /></Act>
          </>
        }
      >
        <Tab icon={icons.outline} label="Outline" className="w-[90px]" />
      </PanelHeader>
      <div className="flex min-h-0 flex-1 pt-[2px] pl-[3px] pr-[3px] pb-[3px]">
        <Thumb />
        <div className="ml-[10px] flex-1 bg-[#f7f7f7]" />
      </div>
    </div>
  );
}

// ---- diagram canvas ----

function Tiny({ className }: { className: string }) {
  return (
    <div className={`absolute ${className}`}>
      <svg width="12" height="13" viewBox="0 0 12 13">
        <circle cx="6" cy="2" r="1.800" fill="#f5c84f" stroke="#a67c10" strokeWidth=".7" />
        <path d="M6 4v3M3 9V7h6v2" fill="none" stroke="#3b63ad" strokeWidth=".9" />
        <rect x=".5" y="8.500" width="4.500" height="3.500" rx="1" fill="#e4effa" stroke="#3b63ad" />
        <rect x="7" y="9" width="4.500" height="3" rx="1" fill="#7dc24b" stroke="#3f8a2e" />
      </svg>
    </div>
  );
}

function Label({ color, children, className = "" }: { color: string; children?: ReactNode; className?: string }) {
  return (
    <div className={`flex items-center gap-[6px] whitespace-nowrap text-[15.300px] leading-[20px] text-[#0a0a14] ${className}`}>
      <Diamond color={color} size={12} />
      {children && <span>{children}</span>}
    </div>
  );
}

function Ellipse({ color, children, className }: { color: string; children: ReactNode; className: string }) {
  return (
    <div className={`absolute flex h-[38px] w-[199px] items-center justify-center rounded-[50%] border border-[#333] bg-white pt-[2px] shadow-[0_1px_0_#9a9a9a] ${className}`}>
      <Label color={color}>{children}</Label>
    </div>
  );
}

function Diagram() {
  return (
    <div className="absolute left-[2px] top-0 h-[237px] w-[862px] border border-black bg-linear-to-r from-white to-[#cfcfcf] shadow-[1px_1px_1px_#9a9a9a]">
      <Label color="#8a3a5e" className="absolute left-[354px] top-[6px]">example processing</Label>

      <div className="absolute left-[34px] top-[69px] h-[68px] w-[155px] border border-black bg-linear-to-r from-white to-[#fde54a] shadow-[1px_1px_1px_#9a9a9a]">
        <Label color="#3f8a6a" className="pl-[3px] pt-[6px]">readInExampleData</Label>
      </div>

      <div className="absolute left-[219px] top-[34px] flex h-[193px] w-[284px] justify-center border border-black bg-linear-to-r from-white to-[#ee2a2e] pt-[6px] shadow-[1px_1px_1px_#9a9a9a]">
        <Label color="#b04050" className="h-[20px]">processExampleData</Label>
      </div>

      <div className="absolute left-[569px] top-[34px] flex h-[193px] w-[284px] justify-center border border-black bg-linear-to-r from-white to-[#87e22f] pt-[6px] shadow-[1px_1px_1px_#9a9a9a]">
        <Label color="#68b768" className="h-[20px]">createReportCells</Label>
      </div>

      <svg className="absolute left-0 top-0" width="860" height="235" viewBox="0 0 860 235">
        <path d="M275 71h220l-19 150H255Z" fill="#8f8f8f" />
        <path d="M625 71h221l-19 150H605Z" fill="#8f8f8f" />
        <path d="M274 69.500h220l-19 150H254Z" fill="#cfcfcf" stroke="#111" strokeDasharray="3 2" />
        <path d="M624 69.500h221l-19 150H604Z" fill="#cfcfcf" stroke="#111" strokeDasharray="3 2" />
        <path d="M189 105l18 16" stroke="#8a8a8a" strokeWidth="2.500" />
        <path d="M221 133l-18-7 7-9Z" fill="#8a8a8a" />
        <path d="M503 132.500h57" stroke="#8a8a8a" strokeWidth="2.500" />
        <path d="M571 132.500 560 127v11Z" fill="#8a8a8a" />
      </svg>

      <Label color="#8a3a5e" className="absolute left-[322px] top-[76px]">scenarioSet1</Label>
      <Label color="#8a3a5e" className="absolute left-[713px] top-[78px]" />

      <Ellipse color="#5a5ab8" className="left-[289px] top-[105px]">AAA</Ellipse>
      <Ellipse color="#5a5ab8" className="left-[289px] top-[175px]">notAAA</Ellipse>
      <Ellipse color="#5a5ab8" className="left-[639px] top-[105px]">IsUSCountry</Ellipse>
      <Ellipse color="#5a5ab8" className="left-[639px] top-[175px]">isNotUSCountry</Ellipse>

      <Tiny className="left-[475px] top-[130px]" />
      <Tiny className="left-[475px] top-[201px]" />
      <Tiny className="left-[489px] top-[215px]" />
      <Tiny className="left-[825px] top-[130px]" />
      <Tiny className="left-[847px] top-[222px]" />
    </div>
  );
}

function Editor() {
  return (
    <div className="flex h-[533px] flex-col rounded-lg bg-white">
      <div className="flex h-[25px] shrink-0 items-stretch justify-between rounded-t-lg bg-[#cddced]">
        <div className="flex w-[171px] items-center rounded-t-lg bg-white pl-[7px] pt-[2px]">
          <DiagramGlyph size={15} />
          <span className="ml-[3px] text-[#10141c]">new FunctionalModule</span>
          <Close className="ml-[6px]" />
        </div>
        <div className="flex items-center pr-[8px] pt-[1px]">
          <Act><Minimize /></Act>
          <Act><Maximize /></Act>
        </div>
      </div>
      <div className="flex min-h-0 flex-1">
        <div className="flex w-[918px] flex-col">
          <EditorToolbar />
          <div className="flex min-h-0 flex-1">
            <div className="relative flex-1 overflow-hidden border-t border-[#c8c8c8]">
              <Diagram />
            </div>
            <ScrollV up down dim thumb={<div className="flex-1" />} />
          </div>
          <div className="flex h-[15px] shrink-0 items-center justify-between bg-[#f0f0f0] pr-[14px]">
            <Arrow d="M8 1 4 5l4 4" dim />
            <Arrow d="M4 1l4 4-4 4" dim />
          </div>
          <div className="h-[4px] shrink-0" />
        </div>
        <div className="mb-[4px] flex w-[13px] shrink-0 flex-col border-x border-[#b4bcc8] bg-[#cddced]">
          <div className="mx-auto flex h-[24px] w-[11px] items-center justify-center border border-dotted border-black bg-white">
            <svg width="7" height="11" viewBox="0 0 7 11">
              <path d="M6 1 1 5.500 6 10Z" fill="#fff" stroke="#666" />
            </svg>
          </div>
        </div>
      </div>
    </div>
  );
}

function PropertiesPanel() {
  return (
    <div className="mt-[5px] flex h-[117px] flex-col rounded-lg bg-white">
      <PanelHeader
        actions={
          <>
            <Act>{icons.pin}</Act>
            <div className="w-[4px]" />
            <Act><Dots /></Act>
            <Act><Minimize /></Act>
            <Act><Maximize /></Act>
          </>
        }
      >
        <Tab icon={icons.propsTab} label="Properties" className="w-[103px]" closeClass="ml-[5px]" />
        <div className="ml-[5px] flex items-center pt-[2px] text-[#9a9a9a]">
          {icons.problems}
          <span className="ml-[3px]">Problems</span>
        </div>
      </PanelHeader>
      <div className="flex h-[37px] shrink-0 items-center border-b-2 border-[#eeeeee] pl-[10px] pt-[3px]">
        <Diamond color="#8a3a5e" size={12} />
        <span className="ml-[7px] text-[16px] font-bold tracking-[0.47px] text-[#505050]">Serial Functional Module example processing</span>
      </div>
      <div className="flex min-h-0 flex-1">
        <div className="ml-[2px] flex w-[105px] shrink-0 flex-col">
          <div className="h-[11px] border-b border-r border-[#999] bg-[#f0f0f0]" />
          <div className="flex h-[22px] items-center pl-[7px] font-bold text-black">Main</div>
          <div className="h-[10px] border-y border-r border-[#999] bg-[#f0f0f0]" />
          <div className="flex h-[10px] items-start justify-center border-b border-r border-[#999] bg-[#f0f0f0]">
            <svg width="10" height="6" viewBox="0 0 10 6">
              <path d="M.5.500h9L5 5.500Z" fill="#fff" stroke="#555" />
            </svg>
          </div>
        </div>
        <div className="relative ml-[12px] min-w-0 flex-1 overflow-hidden pt-[12px]">
          <div className="mr-[13px] flex h-[26px] items-center bg-[#e8e8e8] pl-[5px]">
            <svg width="9" height="5" viewBox="0 0 9 5">
              <path d="M0 0h9L4.500 5Z" fill="#0a7ae0" />
            </svg>
            <span className="ml-[5px] font-bold text-[#0a7ae0]">Properties</span>
          </div>
          <div className="mt-[9px] flex h-[10px]">
            <div className="ml-[9px] mt-[2px] h-[8px] w-[36px] bg-[#f2f2f2]" />
            <div className="ml-[149px] mt-[3px] h-[4px] w-[10px] rounded-t-full bg-[#2f6aa0]" />
            <div className="ml-[15px] h-[10px] flex-1 border-x border-t border-[#a0a8b0]" />
            <div className="w-[22px]" />
          </div>
        </div>
        <div className="mr-[3px] mt-[1px] flex w-[15px] shrink-0 flex-col bg-[#f0f0f0]">
          <Arrow d="M2 7l4-4 4 4" />
          <div className="h-[17px] shrink-0 bg-[#cdcdcd]" />
          <Arrow d="M2 3l4 4 4-4" />
        </div>
      </div>
    </div>
  );
}

export default function App() {
  const menus = ["File", "Edit", "Diagram", "Refactor", "Navigate", "Search", "Project", "Run", "Window", "Help"];
  return (
    <div className="h-[765px] w-[1385px] overflow-hidden bg-[#ececec] pl-[2px] text-[12px] leading-[16px] [font-family:Roboto,'Liberation_Sans',sans-serif]">
      <div className="flex h-[761px] w-[1380px] flex-col border border-[#6e6e6e] bg-white">
        {/* title bar */}
        <div className="flex h-[30px] shrink-0 items-center pl-[10px] text-[#111]">
          <svg width="14" height="14" viewBox="0 0 14 14" className="shrink-0">
            <circle cx="7" cy="7" r="7" fill="#2c2255" />
            <path d="M0 5.500h14M0 8.500h14" stroke="#fff" strokeWidth="1.200" />
            <path d="M1 3A7 7 0 0 0 1 11" stroke="#f7941e" strokeWidth="1.500" fill="none" />
          </svg>
          <span className="ml-[5px] flex-1 whitespace-nowrap tracking-[-0.03px]">
            runtime-ncissue - platform:/resource/org.eclipse.efbt.regmodules.example/representations.aird/new FunctionalModule - Eclipse Platform
          </span>
          <div className="flex items-center">
            <div className="flex w-[46px] justify-center">
              <div className="h-px w-[10px] bg-black" />
            </div>
            <div className="flex w-[46px] justify-center">
              <div className="h-[10px] w-[10px] border border-black" />
            </div>
            <div className="flex w-[44px] justify-center">
              <svg width="11" height="11" viewBox="0 0 11 11">
                <path d="M.5.500l10 10M10.500.500l-10 10" stroke="#000" />
              </svg>
            </div>
          </div>
        </div>
        {/* menu bar */}
        <div className="flex h-[19px] shrink-0 items-center pl-[7px] text-[#111]">
          {menus.map((m) => (
            <span key={m} className="mr-[13.500px]">{m}</span>
          ))}
        </div>
        <MainToolbar />
        {/* workbench */}
        <div className="flex min-h-0 flex-1 bg-[#dfe4f4] pl-[1px] pr-[1px]">
          <div className="w-[438px] shrink-0">
            <ModelExplorer />
            <OutlinePanel />
          </div>
          <div className="ml-[5px] min-w-0 flex-1">
            <Editor />
            <PropertiesPanel />
          </div>
        </div>
        {/* status bar */}
        <div className="relative flex h-[25px] shrink-0 items-center bg-[#dfe4f4] pb-[4px] pl-[3px] text-[#111]">
          Synchronized diagram
          <div className="absolute left-[1094px] top-[5px] h-[16px] w-[2px] border-l-2 border-dotted border-[#a8a49a]" />
        </div>
      </div>
    </div>
  );
}
